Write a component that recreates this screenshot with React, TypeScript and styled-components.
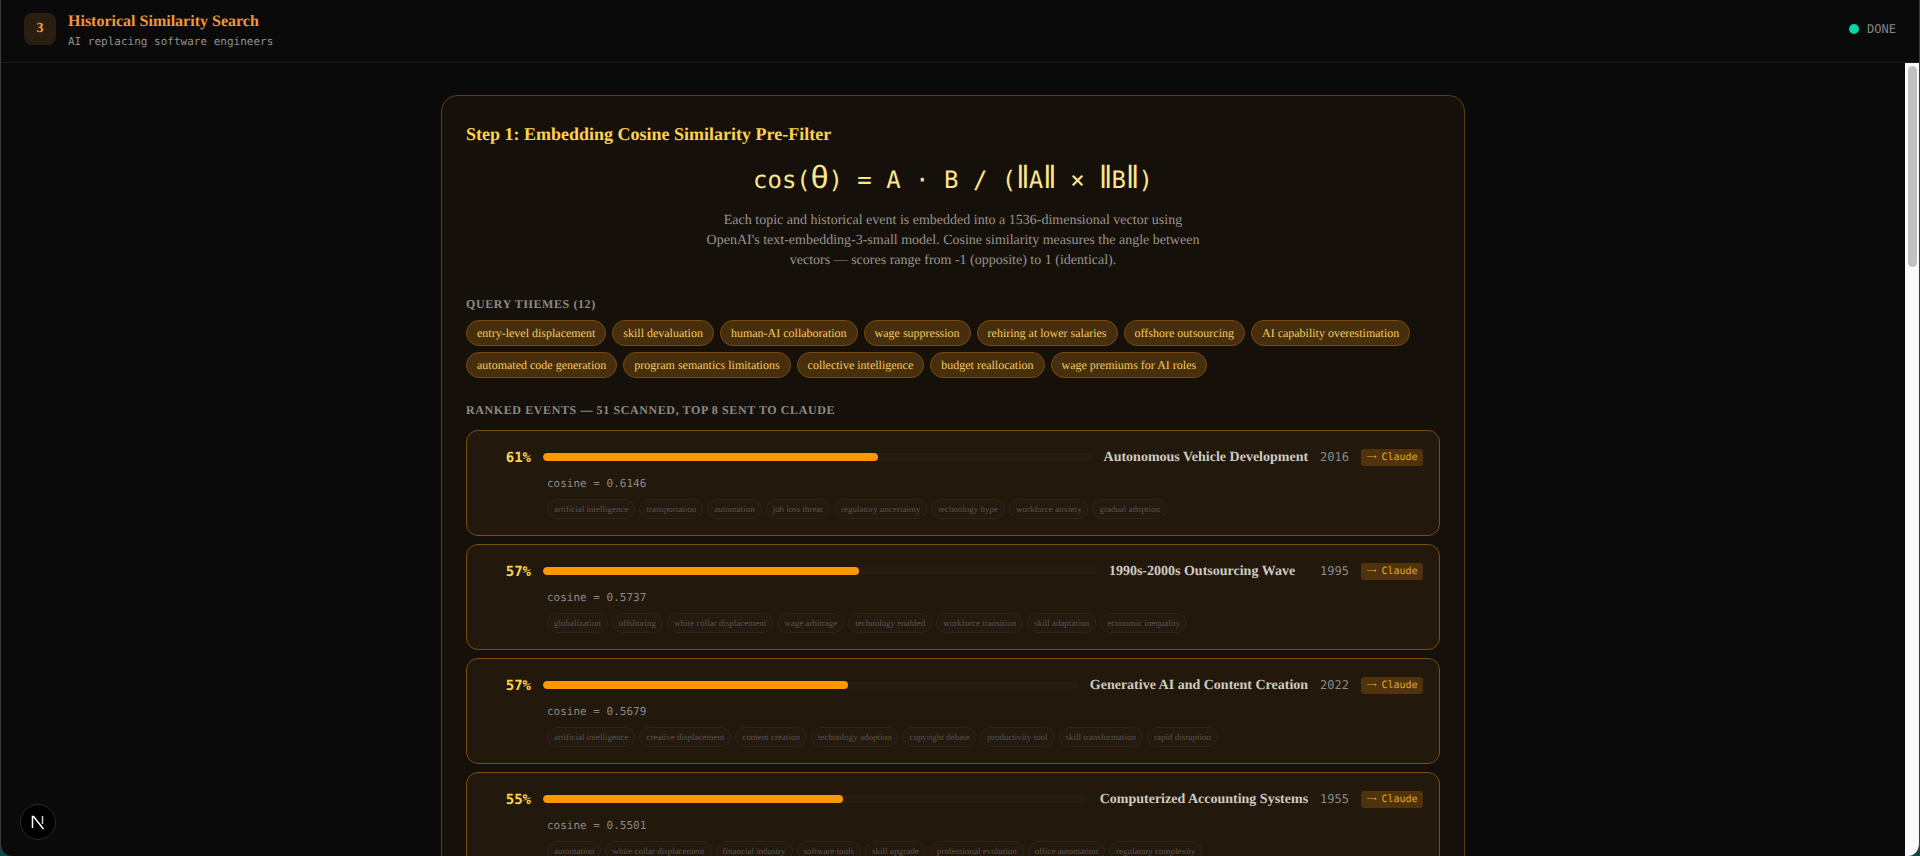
import React from "react";
import styled, { createGlobalStyle } from "styled-components";

const Global = createGlobalStyle`
  html, body { margin: 0; padding: 0; height: 100%; background: #0b4a4a; overflow: hidden; }
  #root { height: 100%; }
  * { box-sizing: border-box; }
  body { text-rendering: geometricPrecision; }
`;

const serif = `"Liberation Serif", "Times New Roman", serif`;
const mono = `"DejaVu Sans Mono", "Liberation Mono", monospace`;

const Modal = styled.div`
  height: 100vh;
  display: flex;
  flex-direction: column;
  background: #0a0a0a;
  border-left: 1px solid #3a3a3a;
  border-right: 1px solid #3a3a3a;
  border-radius: 0 0 12px 12px;
  overflow: hidden;
  font-family: ${serif};
`;

const Header = styled.header`
  flex: none;
  height: 63px;
  display: flex;
  align-items: center;
  justify-content: space-between;
  padding: 0 23px 5px;
  border-bottom: 1px solid #1a1a1a;
`;

const HeaderLeft = styled.div`
  display: flex;
  align-items: center;
  gap: 12px;
`;

const StepBadge = styled.div`
  width: 32px;
  height: 32px;
  border-radius: 8px;
  background: #2a1e10;
  color: #f59e3a;
  font-size: 14px;
  font-weight: 700;
  display: flex;
  align-items: center;
  justify-content: center;
`;

const HeaderText = styled.div`
  padding-top: 4px;
`;

const HeaderTitle = styled.h1`
  margin: 0;
  font-size: 16px;
  line-height: 20px;
  font-weight: 700;
  color: #f0983a;
`;

const HeaderSub = styled.p`
  margin: 2px 0 0;
  font-family: ${mono};
  font-size: 11px;
  line-height: 16px;
  color: #8f8f8f;
`;

const Status = styled.div`
  display: flex;
  align-items: center;
  gap: 8px;
  font-family: ${mono};
  font-size: 12px;
  color: #858585;
`;

const Dot = styled.span`
  width: 10px;
  height: 10px;
  border-radius: 50%;
  background: #06d6a0;
`;

const Body = styled.div`
  flex: 1;
  min-height: 0;
  display: flex;
`;

const Scroller = styled.main`
  flex: 1;
  min-width: 0;
  overflow-y: auto;
  padding: 32px 0;
`;

const ScrollRail = styled.div`
  flex: none;
  width: 14px;
  padding: 3px 2px 0 3px;
  background: #fafafa;
`;

const ScrollThumb = styled.div`
  height: 201px;
  border-radius: 5px;
  background: #c1c1c1;
`;

const Column = styled.div`
  width: 1024px;
  margin: 0 auto;
`;

const Card = styled.section`
  padding: 24px;
  border: 1px solid #5c3b10;
  border-radius: 16px;
  background: #16100a;
`;

const CardTitle = styled.h2`
  margin: 0;
  font-size: 18px;
  line-height: 28px;
  font-weight: 700;
  color: #fcd34d;
`;

const Formula = styled.div`
  margin-top: 16px;
  font-family: ${mono};
  font-size: 24px;
  line-height: 32px;
  height: 32px;
  text-align: center;
  color: #fde68a;
`;

const Theta = styled.span`
  display: inline-block;
  width: 17.6px;
  text-align: center;
  font-family: "Liberation Sans", sans-serif;
  font-size: 32px;
  line-height: 0;
`;

const Norm = styled.span`
  display: inline-block;
  width: 12.5px;
  text-align: center;
  font-family: "Liberation Sans", "DejaVu Sans", sans-serif;
  font-size: 32px;
  line-height: 0;
`;

const Description = styled.p`
  width: 512px;
  margin: 15px auto 0;
  font-size: 14px;
  line-height: 20px;
  text-align: center;
  color: #999590;
`;

const SectionLabel = styled.h3<{ $top: number; $bottom: number }>`
  margin: ${(p) => p.$top}px 0 ${(p) => p.$bottom}px;
  font-size: 12px;
  line-height: 16px;
  font-weight: 700;
  letter-spacing: 0.05em;
  text-transform: uppercase;
  color: #8c8a86;
`;

const ChipWrap = styled.div`
  display: flex;
  flex-wrap: wrap;
  gap: 6px;
`;

const Chip = styled.span`
  padding: 4px 10px;
  font-size: 12px;
  line-height: 16px;
  color: #f4cc62;
  background: #472e0c;
  border: 1px solid #7a4a0e;
  border-radius: 999px;
`;

const EventList = styled.div`
  display: flex;
  flex-direction: column;
  gap: 8px;
`;

const EventRow = styled.article`
  padding: 16px;
  border: 1px solid #7a4d10;
  border-radius: 12px;
  background: #23180c;
`;

const EventTop = styled.div`
  display: flex;
  align-items: center;
  gap: 12px;
  height: 20px;
`;

const Percent = styled.span`
  width: 48px;
  flex: none;
  padding-top: 2px;
  text-align: right;
  font-family: ${mono};
  font-size: 14px;
  font-weight: 700;
  color: #fcd34d;
`;

const Track = styled.div`
  flex: 1;
  height: 8px;
  border-radius: 4px;
  background: #261c12;
  overflow: hidden;
`;

const Fill = styled.div`
  height: 100%;
  border-radius: 4px;
  background: #ff9800;
`;

const EventName = styled.span<{ $tail: number }>`
  margin-right: ${(p) => p.$tail}px;
  padding-top: 2px;
  font-size: 14px;
  font-weight: 700;
  white-space: nowrap;
  color: #cfcbc3;
`;

const Year = styled.span`
  font-family: ${mono};
  font-size: 12px;
  color: #8a8a8a;
`;

const SentBadge = styled.span`
  height: 17px;
  width: 62px;
  display: flex;
  align-items: center;
  justify-content: center;
  gap: 5px;
  white-space: pre;
  font-family: ${mono};
  font-size: 10px;
  color: #e0a92c;
  background: #50320c;
  border-radius: 3px;
`;

const SentArrow = styled.span`
  font-family: "DejaVu Sans", sans-serif;
  font-size: 7px;
`;

const Cosine = styled.div`
  margin: 9px 0 0 64px;
  font-family: ${mono};
  font-size: 11px;
  line-height: 16px;
  color: #8a8a8a;
`;

const TagRow = styled.div`
  display: flex;
  gap: 4px;
  margin: 7px 0 0 64px;
`;

const Tag = styled.span`
  padding: 2px 6px;
  font-size: 8.98px;
  line-height: 14px;
  color: #5a554c;
  border: 1px solid #2f2418;
  background: #241a0f;
  border-radius: 999px;
`;

const DevBadge = styled.button`
  position: fixed;
  left: 20px;
  bottom: 16px;
  width: 36px;
  height: 36px;
  padding: 0;
  display: flex;
  align-items: center;
  justify-content: center;
  background: #000;
  border: 1px solid #2a2a2a;
  border-radius: 50%;
`;

const themes = [
  "entry-level displacement",
  "skill devaluation",
  "human-AI collaboration",
  "wage suppression",
  "rehiring at lower salaries",
  "offshore outsourcing",
  "AI capability overestimation",
  "automated code generation",
  "program semantics limitations",
  "collective intelligence",
  "budget reallocation",
  "wage premiums for AI roles",
];

const events = [
  {
    pct: 61,
    name: "Autonomous Vehicle Development",
    tail: 0,
    year: 2016,
    cos: "0.6146",
    tags: ["artificial intelligence", "transportation", "automation", "job loss threat", "regulatory uncertainty", "technology hype", "workforce anxiety", "gradual adoption"],
  },
  {
    pct: 57,
    name: "1990s-2000s Outsourcing Wave",
    tail: 13,
    year: 1995,
    cos: "0.5737",
    tags: ["globalization", "offshoring", "white collar displacement", "wage arbitrage", "technology enabled", "workforce transition", "skill adaptation", "economic inequality"],
  },
  {
    pct: 57,
    name: "Generative AI and Content Creation",
    tail: 0,
    year: 2022,
    cos: "0.5679",
    tags: ["artificial intelligence", "creative displacement", "content creation", "technology adoption", "copyright debate", "productivity tool", "skill transformation", "rapid disruption"],
  },
  {
    pct: 55,
    name: "Computerized Accounting Systems",
    tail: 0,
    year: 1955,
    cos: "0.5501",
    tags: ["automation", "white collar displacement", "financial industry", "software tools", "skill upgrade", "professional evolution", "office automation", "regulatory complexity"],
  },
];

export default function App() {
  return (
    <>
      <Global />
      <Modal>
        <Header>
          <HeaderLeft>
            <StepBadge>3</StepBadge>
            <HeaderText>
              <HeaderTitle>Historical Similarity Search</HeaderTitle>
              <HeaderSub>AI replacing software engineers</HeaderSub>
            </HeaderText>
          </HeaderLeft>
          <Status>
            <Dot />
            DONE
          </Status>
        </Header>
        <Body>
          <Scroller>
            <Column>
              <Card>
                <CardTitle>Step 1: Embedding Cosine Similarity Pre-Filter</CardTitle>
                <Formula>
                  cos(<Theta>θ</Theta>) = A · B / (<Norm>‖</Norm>A<Norm>‖</Norm> × <Norm>‖</Norm>B<Norm>‖</Norm>)
                </Formula>
                <Description>
                  Each topic and historical event is embedded into a 1536-dimensional vector using OpenAI's
                  text-embedding-3-small model. Cosine similarity measures the angle between vectors — scores
                  range from -1 (opposite) to 1 (identical).
                </Description>
                <SectionLabel $top={25} $bottom={8}>Query Themes (12)</SectionLabel>
                <ChipWrap>
                  {themes.map((t) => (
                    <Chip key={t}>{t}</Chip>
                  ))}
                </ChipWrap>
                <SectionLabel $top={24} $bottom={12}>Ranked Events — 51 scanned, top 8 sent to Claude</SectionLabel>
                <EventList>
                  {events.map((e) => (
                    <EventRow key={e.name}>
                      <EventTop>
                        <Percent>{e.pct}%</Percent>
                        <Track>
                          <Fill style={{ width: `${e.pct}%` }} />
                        </Track>
                        <EventName $tail={e.tail}>{e.name}</EventName>
                        <Year>{e.year}</Year>
                        <SentBadge>
                          <SentArrow>⟶</SentArrow>
                          Claude
                        </SentBadge>
                      </EventTop>
                      <Cosine>cosine = {e.cos}</Cosine>
                      <TagRow>
                        {e.tags.map((t) => (
                          <Tag key={t}>{t}</Tag>
                        ))}
                      </TagRow>
                    </EventRow>
                  ))}
                </EventList>
              </Card>
            </Column>
          </Scroller>
          <ScrollRail>
            <ScrollThumb />
          </ScrollRail>
        </Body>
      </Modal>
      <DevBadge aria-label="Next.js dev tools">
        <svg width="18" height="18" viewBox="0 0 18 18" fill="none">
          <path d="M3.5 15V3.5h1L14.5 16" stroke="#fff" strokeWidth="1.5" />
          <path d="M13.5 3v8" stroke="#cfcfcf" strokeWidth="1.5" />
        </svg>
      </DevBadge>
    </>
  );
}
